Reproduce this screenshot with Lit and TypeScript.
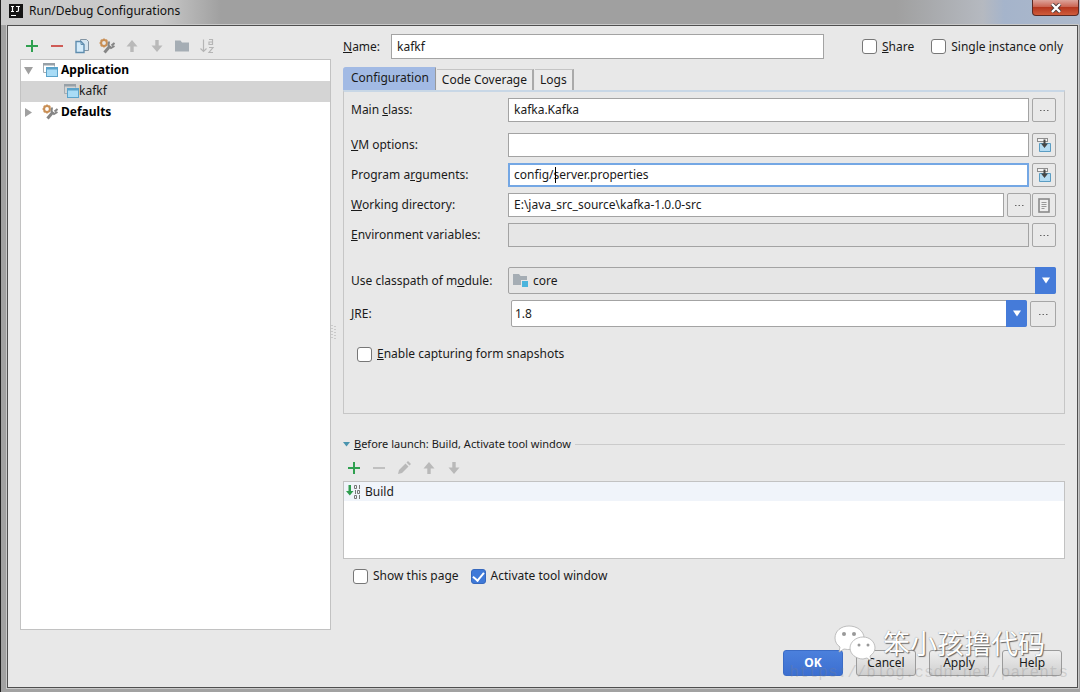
import { LitElement, html, css, svg } from "lit";
import { customElement } from "lit/decorators.js";

const plus = () => html`<svg width="16" height="16" viewBox="0 0 16 16"><path d="M8 2v12M2 8h12" stroke="#2fa050" stroke-width="2" fill="none"/></svg>`;
const minus = (c: string) => html`<svg width="16" height="16" viewBox="0 0 16 16"><path d="M2 8h12" stroke=${c} stroke-width="2"/></svg>`;
const arrow = (down: boolean) => html`<svg width="16" height="16" viewBox="0 0 16 16">${down
  ? svg`<path d="M6.300 2h3.400v5.500H13.500L8 14 2.500 7.500h3.800z" fill="#b9b9b9"/>`
  : svg`<path d="M6.300 14h3.400V8.500H13.500L8 2 2.500 8.500h3.800z" fill="#b9b9b9"/>`}</svg>`;
const wrench = html`<svg width="16" height="16" viewBox="0 0 16 16"><circle cx="5" cy="5" r="2.900" fill="none" stroke="#c98f55" stroke-width="2"/><path d="M5 .5v1.500M5 8v1.500M.5 5h1.500M1.800 1.800l1 1M8.200 1.800l-1 1M1.800 8.200l1-1" stroke="#c98f55" stroke-width="1.600"/><path d="M5.500 14.500l5.500-6.500" stroke="#858585" stroke-width="3"/><path d="M10 3.500l-.5 4 2.500 2.500 3.500-2M15.500 5l-3 2.500" stroke="#858585" stroke-width="2" fill="none"/></svg>`;
const appIcon = html`<svg width="16" height="16" viewBox="0 0 16 16"><path d="M1.500 10.500v-9h11v3" fill="none" stroke="#a5adb3"/><path d="M1 1h12v2.500H1z" fill="#97a0a7"/><path d="M1.500 10.500H4" stroke="#a5adb3"/><rect x="4.500" y="5.500" width="11" height="9" fill="#a9dcf6" stroke="#5ba3ca"/><path d="M4 5h12v2.500H4z" fill="#5ba3ca"/></svg>`;
const insertIcon = html`<svg width="16" height="16" viewBox="0 0 16 16"><path d="M3.500 6.500h11v8h-11z" fill="#b5dcf3" stroke="#5b9dc3"/><rect x="1.500" y="1.500" width="10" height="3" fill="#f4f4f4" stroke="#8d8d8d"/><path d="M7.500 2.500h2v4H12L8.500 11 5 6.500h2.500z" fill="#464646"/></svg>`;

@customElement("app-root")
export class AppRoot extends LitElement {
  static styles = css`
    :host { display: block; font: 12px/16px "Noto Sans", "Open Sans", sans-serif; color: #1a1a1a; }
    * { box-sizing: border-box; }
    svg { display: block; flex: none; }
    button, input, select { font: inherit; color: inherit; margin: 0; }
    .window { position: relative; min-height: 100vh; display: flex; flex-direction: column; padding: 0 2px 4px 6px; background: #a2a2a2; border-left: 1px solid #222; overflow: hidden; }
    .title { height: 25px; display: flex; align-items: flex-start; margin: 0 -2px 0 -6px; padding: 0 0 0 8px; background: linear-gradient(90deg, #ccc 0, #c8c8c8 160px, #a0a0a0 220px, #a0a0a0 83%, #b5b9c0 91%, #a5b4cb 93%, #adb9cb 100%); }
    .title svg { margin-top: 4px; }
    .title h1 { font: inherit; margin: 3px 0 0 6px; flex: 1; color: #111; }
    .close { width: 47px; height: 16px; margin-right: 1px; padding: 0; border: 1px solid #5c2a24; border-top: 0; border-radius: 0 0 4px 4px; background: linear-gradient(#dda49b, #cb6553 45%, #b5371f 50%, #cf5c3c); display: grid; place-items: center; }
    .title .close svg { margin: 0; }
    .dialog { flex: 1; display: flex; flex-direction: column; background: #e8e8e8; border: 1px solid #4f4f4f; outline: 1px solid #c9c9c9; padding: 8px 12px 11px; }
    .split { flex: 1; display: flex; align-items: stretch; }
    .side { width: 311px; display: flex; flex-direction: column; }
    .tools { display: flex; align-items: center; gap: 9px; height: 25px; padding: 0 4px 2px; }
    .tools button, .mini button { padding: 0; border: 0; background: none; width: 16px; height: 16px; }
    .tree { flex: 1; background: #fff; border: 1px solid #c2c2c2; margin: 0; padding: 0; list-style: none; }
    .node { height: 21px; display: flex; align-items: center; gap: 3px; padding: 0 0 1px 3px; }
    .node .appic { margin-left: 6px; }
    .node.child { background: #d4d4d4; gap: 0; padding-left: 42px; }
    .b { font-weight: 700; color: #000; }
    .grip { width: 12px; display: flex; align-items: center; }
    .main { flex: 1; min-width: 0; display: flex; flex-direction: column; }
    .row { display: flex; align-items: center; }
    .name { height: 25px; }
    .namelabel { width: 48px; }
    .text { height: 24px; border: 1px solid #a3a3a3; background: #fff; padding: 0 6px 1px 5px; border-radius: 0; outline: none; flex: 1; min-width: 0; width: 100%; }
    .name .text { height: 25px; flex: 0 1 433px; }
    .checks { flex: 1; display: flex; justify-content: flex-end; gap: 17px; padding-right: 2px; white-space: nowrap; }
    .check { display: flex; align-items: center; gap: 5px; }
    .check input { appearance: none; flex: none; width: 15px; height: 15px; border: 1px solid #777; border-radius: 3px; background: #fff; display: grid; place-items: center; }
    .check input:checked { background: #3f79d8; border-color: #3668bd; }
    .check input:checked::before { content: ""; width: 5px; height: 9px; border: solid #fff; border-width: 0 2px 2px 0; transform: translateY(-1px) rotate(40deg); }
    .tabs { display: flex; align-items: flex-end; height: 23px; margin-top: 8px; }
    .tab { border: 1px solid #c4c4c4; border-width: 1px 2px 0 0; border-right-color: #aaa; background: #ebebeb; height: 21px; padding: 0 5px; margin-right: 1px; white-space: nowrap; }
    .tab.on { height: 23px; background: #a2bae4; border-color: #a2bae4 #999; border-width: 1px 1px 0 0; padding: 0 6px 2px 8px; border-radius: 3px 0 0; }
    .panel { border: 1px solid #c6c6c6; border-top: 2px solid #c8d7e6; padding: 6px 8px 0 7px; height: 324px; }
    .field { display: flex; align-items: center; gap: 3px; height: 24px; margin-bottom: 6px; }
    .field > label { width: 154px; flex: none; white-space: nowrap; }
    .wide { margin-bottom: 11px; }
    .env { margin-bottom: 20px; }
    .pair { display: flex; gap: 1px; }
    .module, .jre { height: 27px; margin-bottom: 6px; }
    .jre > label { width: 157px; }
    .gray { background: #e6e6e6; }
    .focus { border: 2px solid #74a7e4; padding-left: 4px; }
    .box { position: relative; flex: 1; display: flex; min-width: 0; }
    .caret { position: absolute; left: 47px; top: 4px; width: 1px; height: 16px; background: #000; }
    .sq { width: 24px; height: 24px; flex: none; border: 1px solid #a6a6a6; border-radius: 2px; background: #e9e9e9; padding: 0; display: grid; place-items: center; }
    .jre .sq { width: 26px; height: 26px; }
    .combo { appearance: none; flex: 1; min-width: 0; height: 27px; border: 1px solid #a3a3a3; border-radius: 2px; background: #fff; padding: 0 24px 0 3px; }
    .module .combo { background: #e6e6e6; padding-left: 24px; }
    .drop { position: absolute; right: 0; top: 0; width: 21px; height: 27px; background: #457bd9; border-radius: 0 2px 2px 0; display: grid; place-items: center; pointer-events: none; }
    .modic { position: absolute; left: 5px; top: 6px; pointer-events: none; }
    .snap { margin: 19px 0 0 6px; }
    .before { display: flex; align-items: center; gap: 4px; margin-top: 22px; }
    .before span { font-size: 11px; }
    .before::after { content: ""; height: 1px; flex: 1; background: #cbcbcb; }
    .mini { display: flex; align-items: center; gap: 9px; height: 29px; padding: 2px 4px 0 3px; }
    .list { height: 78px; border: 1px solid #c2c2c2; background: #fff; margin: 0; padding: 0; list-style: none; }
    .item { display: flex; align-items: center; gap: 3px; height: 19px; background: #f0f4fa; padding-left: 2px; }
    .bottom { display: flex; gap: 12px; padding: 9px 0 0 10px; }
    .foot { display: flex; justify-content: flex-end; gap: 13px; padding-right: 3px; margin-top: 20px; }
    .btn { width: 60px; height: 26px; border: 1px solid #9b9b9b; border-radius: 3px; background: linear-gradient(#eee, #cfcfcf); padding: 0; }
    .btn.ok { background: linear-gradient(#4b80dc, #3c6fd0); border-color: #3b6cc6; color: #fff; font-weight: 700; }
    .mark { position: absolute; right: 35px; bottom: 31px; display: flex; align-items: center; gap: 6px; pointer-events: none; font: 27px/36px "Noto Sans CJK SC", sans-serif; color: #fff; text-shadow: 1px 1px 1px #666, 0 0 1px #888; }
    .url { position: absolute; right: 12px; bottom: 9px; pointer-events: none; font: 16px/20px "Liberation Mono", monospace; color: rgba(130, 130, 130, .26); }
  `;

  private dots() {
    return html`<svg width="10" height="4" viewBox="0 0 10 4"><path d="M1 2.500h1.500M4.500 2.500h1.500M8 2.500h1.500" stroke="#666"/></svg>`;
  }
  private drop() {
    return html`<span class="drop"><svg width="8" height="7" viewBox="0 0 9 7"><path d="M0 0h9L4.500 7z" fill="#fff"/></svg></span>`;
  }

  render() {
    return html`
      <div class="window">
        <header class="title">
          <svg width="14" height="14" viewBox="0 0 14 14"><rect width="14" height="14" fill="#151515"/><path d="M2 2.500h3M3.500 2.500v5M2 7.500h3M7 2.500h4M9.500 2.500v4q0 1-1.500 1H7M2 11.500h5" stroke="#fff" stroke-width="1.200" fill="none"/></svg>
          <h1>Run/Debug Configurations</h1>
          <button class="close" aria-label="Close"><svg width="12" height="10" viewBox="0 0 12 10"><path d="M2 1l8 8M10 1L2 9" stroke="#4d3a3a" stroke-width="4"/><path d="M2 1l8 8M10 1L2 9" stroke="#fff" stroke-width="2.400"/></svg></button>
        </header>
        <main class="dialog">
          <div class="split">
            <section class="side">
              <div class="tools">
                <button aria-label="Add">${plus()}</button>
                <button aria-label="Remove">${minus("#cf5b56")}</button>
                <button aria-label="Copy"><svg width="16" height="16" viewBox="0 0 16 16"><path d="M6.500 1.500h6l2 2v9h-8z" fill="#d5e5f0" stroke="#8294a3"/><path d="M2 3.500h5l3 3v8H2z" fill="#d4ebfa" stroke="#5f8dae" stroke-width="1.400"/><path d="M7 3.500v3h3" fill="none" stroke="#5f8dae"/></svg></button>
                <button aria-label="Edit defaults">${wrench}</button>
                <button aria-label="Move up">${arrow(false)}</button>
                <button aria-label="Move down">${arrow(true)}</button>
                <button aria-label="New folder"><svg width="16" height="16" viewBox="0 0 16 16"><path d="M1 2.500h5.500l1.500 2h7v9H1z" fill="#a5adb4"/></svg></button>
                <button aria-label="Sort"><svg width="16" height="16" viewBox="0 0 16 16"><path d="M4.500 1.500v12M1.500 10.500l3 3 3-3M10 1.500h3.500v5h-3.500v-2.500h3.500M10 9.500h4l-4 5h4" fill="none" stroke="#b5b5b5" stroke-width="1.200"/></svg></button>
              </div>
              <ul class="tree">
                <li class="node b"><svg width="9" height="9" viewBox="0 0 9 9"><path d="M0 1h9L4.500 8.500z" fill="#a0a0a0"/></svg><span class="appic">${appIcon}</span>Application</li>
                <li class="node child">${appIcon}kafkf</li>
                <li class="node b"><svg width="9" height="9" viewBox="0 0 9 9"><path d="M1 0v9l7-4.500z" fill="#a0a0a0"/></svg><span class="appic">${wrench}</span>Defaults</li>
              </ul>
            </section>
            <div class="grip"><svg width="5" height="15" viewBox="0 0 5 15"><path d="M1 0v15M4 1v14" stroke="#aaa" stroke-dasharray="1 2"/></svg></div>
            <section class="main">
              <div class="row name">
                <label class="namelabel" for="name"><u>N</u>ame:</label>
                <input class="text" id="name" value="kafkf">
                <div class="checks">
                  <label class="check"><input type="checkbox"><span><u>S</u>hare</span></label>
                  <label class="check"><input type="checkbox"><span>Single <u>i</u>nstance only</span></label>
                </div>
              </div>
              <nav class="tabs"><button class="tab on">Configuration</button><button class="tab">Code Coverage</button><button class="tab">Logs</button></nav>
              <div class="panel">
                <div class="field wide"><label for="mc">Main <u>c</u>lass:</label><input class="text" id="mc" value="kafka.Kafka"><button class="sq" aria-label="Browse class">${this.dots()}</button></div>
                <div class="field"><label for="vm"><u>V</u>M options:</label><input class="text" id="vm"><button class="sq" aria-label="Expand">${insertIcon}</button></div>
                <div class="field"><label for="pa">Program a<u>r</u>guments:</label><div class="box"><input class="text focus" id="pa" value="config/server.properties"><i class="caret"></i></div><button class="sq" aria-label="Expand">${insertIcon}</button></div>
                <div class="field"><label for="wd"><u>W</u>orking directory:</label><input class="text" id="wd" value="E:\\java_src_source\\kafka-1.0.0-src"><div class="pair"><button class="sq" aria-label="Browse directory">${this.dots()}</button><button class="sq" aria-label="Macros"><svg width="12" height="15" viewBox="0 0 12 15"><rect x="1" y="1" width="10" height="13" fill="#eee" stroke="#8a8a8a" stroke-width="1.600"/><path d="M3.500 4.500h5M3.500 6.500h5M3.500 8.500h5M3.500 10.500h3" stroke="#999"/></svg></button></div></div>
                <div class="field env"><label for="ev"><u>E</u>nvironment variables:</label><input class="text gray" id="ev"><button class="sq" aria-label="Edit variables">${this.dots()}</button></div>
                <div class="field module"><label for="mod">Use classpath of m<u>o</u>dule:</label><div class="box"><select class="combo" id="mod"><option>core</option></select><svg class="modic" width="16" height="15" viewBox="0 0 16 15"><path d="M0 1h6l1.500 2H14v9H0z" fill="#a5adb4"/><rect x="8" y="7" width="8" height="8" fill="#e6e6e6"/><rect x="9" y="8" width="6" height="6" fill="#4bb4dc"/></svg>${this.drop()}</div></div>
                <div class="field jre"><label for="jre"><u>J</u>RE:</label><div class="box"><select class="combo" id="jre"><option>1.8</option></select>${this.drop()}</div><button class="sq" aria-label="Browse JRE">${this.dots()}</button></div>
                <label class="check snap"><input type="checkbox"><span><u>E</u>nable capturing form snapshots</span></label>
              </div>
              <div class="before"><svg width="7" height="6" viewBox="0 0 7 6"><path d="M0 1h7L3.500 5.500z" fill="#4a94ae"/></svg><span><u>B</u>efore launch: Build, Activate tool window</span></div>
              <div class="mini">
                <button aria-label="Add task">${plus()}</button>
                <button aria-label="Remove task">${minus("#c0c0c0")}</button>
                <button aria-label="Edit task"><svg width="16" height="16" viewBox="0 0 16 16"><path d="M2 14l1-4 6.500-6.500 3 3L6 13zM10.500 2.500L12 1l3 3-1.500 1.500z" fill="#b9b9b9"/></svg></button>
                <button aria-label="Task up">${arrow(false)}</button>
                <button aria-label="Task down">${arrow(true)}</button>
              </div>
              <ul class="list"><li class="item"><svg width="16" height="16" viewBox="0 0 16 16"><path d="M2.500 1h2.500v6h2.500L3.800 11.500 0 7h2.500z" fill="#2f9d4f"/><path d="M8.500 1.500h2v3h-2zM8.500 11.500h2v3h-2zM11.500 6.500h2v3h-2zM13.500 1v4M9.500 6v4M13.500 11v4" fill="none" stroke="#777"/></svg>Build</li></ul>
              <div class="bottom">
                <label class="check"><input type="checkbox"><span>Show this page</span></label>
                <label class="check"><input type="checkbox" checked><span>Activate tool window</span></label>
              </div>
            </section>
          </div>
          <footer class="foot"><button class="btn ok">OK</button><button class="btn">Cancel</button><button class="btn">Apply</button><button class="btn">Help</button></footer>
        </main>
        <div class="url">https://blog.csdn.net/parents</div>
        <div class="mark"><svg width="43" height="36" viewBox="0 0 43 36"><g fill="#fff" stroke="#b0b0b0" stroke-width=".8"><path d="M15 1C7 1 1 6 1 13c0 4 2 7 5 9l-1 5 5-3c9 2 20-2 20-11C30 6 23 1 15 1z"/><path d="M29 12c-7 0-13 5-13 11s6 11 13 11l4-1 4 3-1-5c3-2 5-5 5-8 0-6-5-11-12-11z"/></g><g fill="#999"><circle cx="10" cy="9" r="2"/><circle cx="20" cy="9" r="2"/><circle cx="25" cy="20" r="1.500"/><circle cx="34" cy="20" r="1.500"/></g></svg>笨小孩撸代码</div>
      </div>`;
  }
}
